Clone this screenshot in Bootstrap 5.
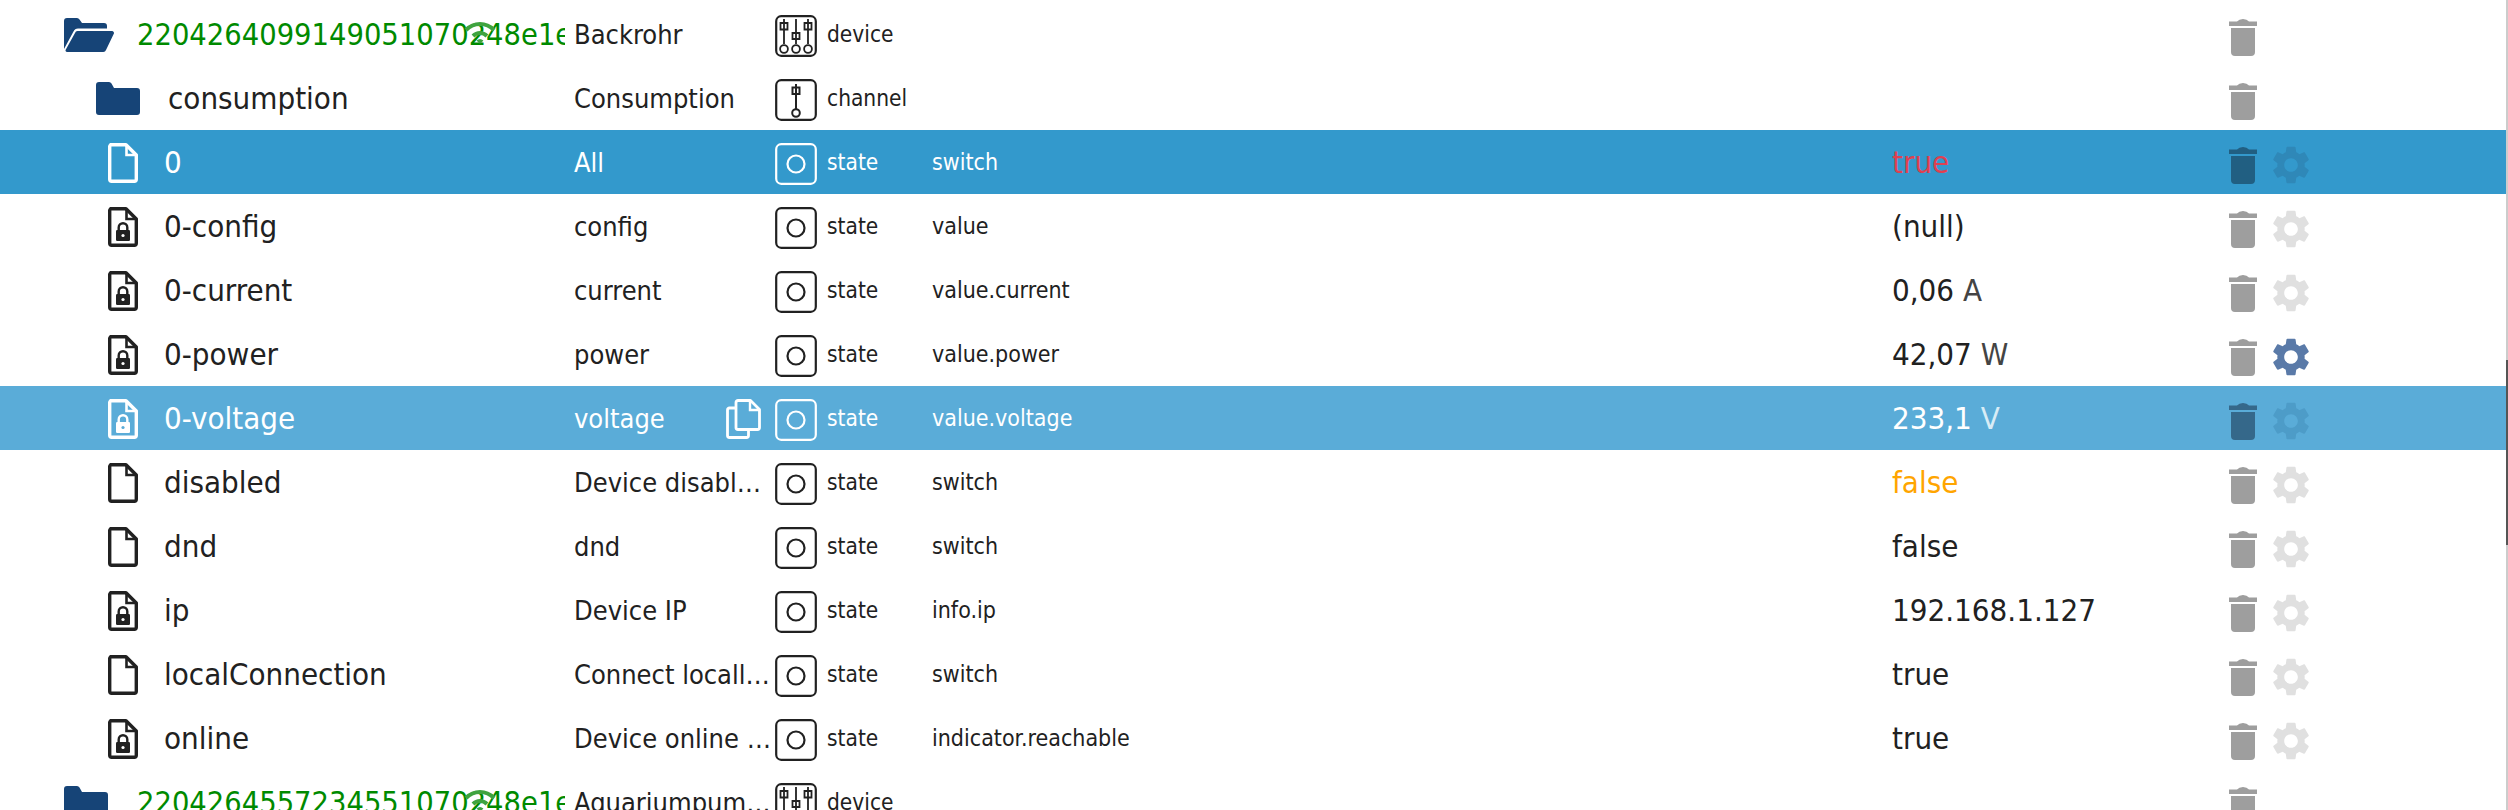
<!DOCTYPE html>
<html lang="en">
<head>
    <meta charset="UTF-8">
    <title>Objects</title>
    <link href="https://cdn.jsdelivr.net/npm/bootstrap@5.3.0/dist/css/bootstrap.min.css" rel="stylesheet">
    <style>
        html, body { height: 810px; overflow: hidden; }
        body {
            --lock-hole: #fff;
            background: #fff;
            color: #212121;
            font-family: "DejaVu Sans Condensed", "DejaVu Sans", sans-serif;
            font-stretch: condensed;
            padding-top: 2px;
            padding-right: 2px;
        }
        .scroll-track { position: fixed; top: 0; right: 0; bottom: 0; width: 2px; background: #ccc; }
        .scroll-thumb { position: absolute; top: 360px; left: 0; right: 0; height: 185px; background: #555; }
        .obj-row { height: 64px; padding-top: 1px; }
        .obj-row.is-selected { background: #3399cc; color: #fff; --lock-hole: #3399cc; }
        .obj-row.is-hover { background: #5aacd8; color: #fff; --lock-hole: #5aacd8; }
        .cell-tree { width: 565px; font-size: 31px; white-space: nowrap; overflow: hidden; }
        .cell-name { width: 210px; padding: 0 0 0 9px; font-size: 27px; line-height: 62px; height: 62px; white-space: nowrap; overflow: hidden; text-overflow: ellipsis; }
        .cell-type { width: 157px; font-size: 22.500px; }
        .cell-role { width: 960px; font-size: 23px; }
        .cell-value { width: 337px; font-size: 31px; }
        .cell-tree.level-0 { padding-left: 64px; }
        .cell-tree.level-1 { padding-left: 96px; }
        .cell-tree.level-2 { padding-left: 108px; }
        .tree-label { margin-left: 26px; }
        .level-1 .tree-label { margin-left: 28px; }
        .id-text { color: #008a00; font-size: 30.500px; margin-left: 23px; }
        .ico-folder-open { width: 50px; height: 34px; color: #164477; }
        .ico-folder { width: 44px; height: 33px; color: #164477; }
        .level-0 .ico-folder { margin-right: 6px; }
        .ico-file { width: 30px; height: 40px; }
        .ico-type { width: 42px; height: 42px; margin: 3px 10px 0 0; }
        .ico-copy { width: 35px; height: 40px; position: absolute; right: 14px; top: 11px; }
        .ico-wifi { width: 32px; height: 23px; color: #3fa33f; position: absolute; left: 464px; top: 9px; }
        .ico-trash { width: 28px; height: 37px; margin-top: 5px; color: #9e9e9e; }
        .ico-gear { width: 38px; height: 38px; margin: 5px 0 0 15px; color: #e0e0e0; }
        .is-selected .ico-trash { color: #215f82; }
        .is-selected .ico-gear { color: #2f88b8; }
        .is-hover .ico-trash { color: #35688a; }
        .is-hover .ico-gear { color: #4d9cc8; }
        .ico-gear.is-set { color: #5a7aa8; }
        .val-red { color: #e04050; }
        .val-orange { color: #ffa500; }
        .val-unit { color: #444; }
        .is-hover .val-unit { color: #d8ecf6; }
    </style>
</head>
<body>
    <!-- shared icons -->
    <svg width="0" height="0" class="position-absolute">
        <symbol id="folderOpen" viewBox="0 0 50 34">
            <path fill="currentColor" d="M0 3a3 3 0 0 1 3-3h10a3 3 0 0 1 2.500 1.500L18 5h22a3 3 0 0 1 3 3v2.500H14a5 5 0 0 0-4.500 3L0 31z"/>
            <path fill="currentColor" d="M13.500 13h34.500a2 2 0 0 1 1.800 2.800L42 32a3 3 0 0 1-2.700 2H3a1.500 1.500 0 0 1-1.300-2.200L11 15a3 3 0 0 1 2.500-2z"/>
        </symbol>
        <symbol id="folderClosed" viewBox="0 0 44 33">
            <path fill="currentColor" d="M0 3a3 3 0 0 1 3-3h10a3 3 0 0 1 2.500 1.500L18 6h23a3 3 0 0 1 3 3v21a3 3 0 0 1-3 3H3a3 3 0 0 1-3-3z"/>
        </symbol>
        <symbol id="fileIco" viewBox="0 0 30 40">
            <path fill="none" stroke="currentColor" stroke-width="3.400" stroke-linejoin="round" d="M3.500 1.700h14.500L28.300 12v24.300a2 2 0 0 1-2 2H3.700a2 2 0 0 1-2-2V3.500a2 2 0 0 1 2-2z"/>
            <path fill="none" stroke="currentColor" stroke-width="2.600" d="M18.500 2v10h10"/>
        </symbol>
        <symbol id="fileLock" viewBox="0 0 30 40">
            <use href="#fileIco"/>
            <rect x="8" y="23" width="14" height="11" rx="1.200" fill="currentColor"/>
            <path fill="none" stroke="currentColor" stroke-width="2.400" d="M10.700 24v-3.500a4.300 4.300 0 0 1 8.600 0V24"/>
            <circle cx="15" cy="28.500" r="1.600" fill="var(--lock-hole)"/>
        </symbol>
        <symbol id="typeState" viewBox="0 0 42 42">
            <rect x="1.200" y="1.200" width="39.600" height="39.600" rx="5" fill="none" stroke="currentColor" stroke-width="2.200"/>
            <circle cx="21" cy="21" r="8.500" fill="none" stroke="currentColor" stroke-width="2.200"/>
        </symbol>
        <symbol id="typeChannel" viewBox="0 0 42 42">
            <rect x="1.200" y="1.200" width="39.600" height="39.600" rx="5" fill="none" stroke="currentColor" stroke-width="2.200"/>
            <path fill="none" stroke="currentColor" stroke-width="2" d="M21 5v25M17.500 8.500h7v6.500h-7z"/>
            <circle cx="21" cy="34" r="3.800" fill="none" stroke="currentColor" stroke-width="2"/>
        </symbol>
        <symbol id="typeDevice" viewBox="0 0 42 42">
            <rect x="1.200" y="1.200" width="39.600" height="39.600" rx="5" fill="none" stroke="currentColor" stroke-width="2.200"/>
            <path fill="none" stroke="currentColor" stroke-width="1.800" d="M9 4v25M21 4v25M33 4v25M5.500 8h7v6.500h-7zM17.500 18h7v6h-7zM29.500 8h7v6.500h-7z"/>
            <g fill="none" stroke="currentColor" stroke-width="1.800"><circle cx="9" cy="34" r="3.900"/><circle cx="21" cy="34" r="3.900"/><circle cx="33" cy="34" r="3.900"/></g>
        </symbol>
        <symbol id="copyIco" viewBox="0 0 35 40">
            <path fill="none" stroke="currentColor" stroke-width="2.800" stroke-linejoin="round" d="M12 1.500h12.500l9 9v18a2 2 0 0 1-2 2H12a2 2 0 0 1-2-2v-25a2 2 0 0 1 2-2z"/>
            <path fill="none" stroke="currentColor" stroke-width="2.400" d="M24 2v9h9"/>
            <path fill="none" stroke="currentColor" stroke-width="2.800" stroke-linejoin="round" d="M9 9H3.500a2 2 0 0 0-2 2v25.500a2 2 0 0 0 2 2h17a2 2 0 0 0 2-2V31"/>
        </symbol>
        <symbol id="wifiIco" viewBox="0 0 32 23">
            <path fill="none" stroke="currentColor" stroke-width="4" d="M2 9c8-8 20-8 28 0M9 15c4-4 10-4 14 0M14 21c1.500-1.500 2.500-1.500 4 0"/>
        </symbol>
        <symbol id="trashIco" viewBox="0 0 28 37">
            <path fill="currentColor" d="M0 2.500h8Q10 0 14 0t6 2.500h8V7H0zM2 9h24v24a4 4 0 0 1-4 4H6a4 4 0 0 1-4-4z"/>
        </symbol>
        <symbol id="gearIco" viewBox="2.600 2 18.800 20">
            <path fill="currentColor" d="M19.140 12.940c.04-.3.06-.61.06-.94 0-.32-.02-.64-.07-.94l2.030-1.580c.18-.14.23-.41.12-.61l-1.920-3.320c-.12-.22-.37-.29-.59-.22l-2.390.96c-.5-.38-1.030-.7-1.620-.94l-.36-2.540c-.04-.24-.24-.41-.48-.41h-3.840c-.24 0-.43.17-.47.41l-.36 2.540c-.59.24-1.130.57-1.620.94l-2.390-.96c-.22-.08-.47 0-.59.22L2.740 8.870c-.12.21-.08.47.12.61l2.030 1.580c-.05.3-.09.63-.09.94s.02.64.07.94l-2.030 1.580c-.18.14-.23.41-.12.61l1.920 3.320c.12.22.37.29.59.22l2.390-.96c.5.38 1.030.7 1.620.94l.36 2.540c.05.24.24.41.48.41h3.840c.24 0 .44-.17.47-.41l.36-2.540c.59-.24 1.130-.56 1.620-.94l2.390.96c.22.08.47 0 .59-.22l1.920-3.320c.12-.22.07-.47-.12-.61l-2.010-1.580zM12 15.600c-1.980 0-3.600-1.620-3.600-3.600s1.620-3.600 3.600-3.600 3.600 1.620 3.600 3.600-1.620 3.600-3.600 3.600z"/>
        </symbol>
    </svg>

    <div class="obj-row d-flex align-items-center">
        <div class="cell-tree level-0 d-flex align-items-center position-relative">
            <svg class="ico-folder-open flex-shrink-0"><use href="#folderOpen"/></svg>
            <span class="id-text">2204264099149051070248e1e</span>
            <svg class="ico-wifi"><use href="#wifiIco"/></svg>
        </div>
        <div class="cell-name">Backrohr</div>
        <div class="cell-type d-flex align-items-center"><svg class="ico-type"><use href="#typeDevice"/></svg>device</div>
        <div class="cell-role"></div>
        <div class="cell-value"></div>
        <svg class="ico-trash"><use href="#trashIco"/></svg>
    </div>

    <div class="obj-row d-flex align-items-center">
        <div class="cell-tree level-1 d-flex align-items-center">
            <svg class="ico-folder flex-shrink-0"><use href="#folderClosed"/></svg>
            <span class="tree-label">consumption</span>
        </div>
        <div class="cell-name">Consumption</div>
        <div class="cell-type d-flex align-items-center"><svg class="ico-type"><use href="#typeChannel"/></svg>channel</div>
        <div class="cell-role"></div>
        <div class="cell-value"></div>
        <svg class="ico-trash"><use href="#trashIco"/></svg>
    </div>

    <div class="obj-row is-selected d-flex align-items-center">
        <div class="cell-tree level-2 d-flex align-items-center">
            <svg class="ico-file flex-shrink-0"><use href="#fileIco"/></svg>
            <span class="tree-label">0</span>
        </div>
        <div class="cell-name">All</div>
        <div class="cell-type d-flex align-items-center"><svg class="ico-type"><use href="#typeState"/></svg>state</div>
        <div class="cell-role">switch</div>
        <div class="cell-value val-red">true</div>
        <svg class="ico-trash"><use href="#trashIco"/></svg>
        <svg class="ico-gear"><use href="#gearIco"/></svg>
    </div>

    <div class="obj-row d-flex align-items-center">
        <div class="cell-tree level-2 d-flex align-items-center">
            <svg class="ico-file flex-shrink-0"><use href="#fileLock"/></svg>
            <span class="tree-label">0-config</span>
        </div>
        <div class="cell-name">config</div>
        <div class="cell-type d-flex align-items-center"><svg class="ico-type"><use href="#typeState"/></svg>state</div>
        <div class="cell-role">value</div>
        <div class="cell-value">(null)</div>
        <svg class="ico-trash"><use href="#trashIco"/></svg>
        <svg class="ico-gear"><use href="#gearIco"/></svg>
    </div>

    <div class="obj-row d-flex align-items-center">
        <div class="cell-tree level-2 d-flex align-items-center">
            <svg class="ico-file flex-shrink-0"><use href="#fileLock"/></svg>
            <span class="tree-label">0-current</span>
        </div>
        <div class="cell-name">current</div>
        <div class="cell-type d-flex align-items-center"><svg class="ico-type"><use href="#typeState"/></svg>state</div>
        <div class="cell-role">value.current</div>
        <div class="cell-value">0,06 <span class="val-unit">A</span></div>
        <svg class="ico-trash"><use href="#trashIco"/></svg>
        <svg class="ico-gear"><use href="#gearIco"/></svg>
    </div>

    <div class="obj-row d-flex align-items-center">
        <div class="cell-tree level-2 d-flex align-items-center">
            <svg class="ico-file flex-shrink-0"><use href="#fileLock"/></svg>
            <span class="tree-label">0-power</span>
        </div>
        <div class="cell-name">power</div>
        <div class="cell-type d-flex align-items-center"><svg class="ico-type"><use href="#typeState"/></svg>state</div>
        <div class="cell-role">value.power</div>
        <div class="cell-value">42,07 <span class="val-unit">W</span></div>
        <svg class="ico-trash"><use href="#trashIco"/></svg>
        <svg class="ico-gear is-set"><use href="#gearIco"/></svg>
    </div>

    <div class="obj-row is-hover d-flex align-items-center">
        <div class="cell-tree level-2 d-flex align-items-center">
            <svg class="ico-file flex-shrink-0"><use href="#fileLock"/></svg>
            <span class="tree-label">0-voltage</span>
        </div>
        <div class="cell-name position-relative">voltage<svg class="ico-copy"><use href="#copyIco"/></svg></div>
        <div class="cell-type d-flex align-items-center"><svg class="ico-type"><use href="#typeState"/></svg>state</div>
        <div class="cell-role">value.voltage</div>
        <div class="cell-value">233,1 <span class="val-unit">V</span></div>
        <svg class="ico-trash"><use href="#trashIco"/></svg>
        <svg class="ico-gear"><use href="#gearIco"/></svg>
    </div>

    <div class="obj-row d-flex align-items-center">
        <div class="cell-tree level-2 d-flex align-items-center">
            <svg class="ico-file flex-shrink-0"><use href="#fileIco"/></svg>
            <span class="tree-label">disabled</span>
        </div>
        <div class="cell-name">Device disabled flag</div>
        <div class="cell-type d-flex align-items-center"><svg class="ico-type"><use href="#typeState"/></svg>state</div>
        <div class="cell-role">switch</div>
        <div class="cell-value val-orange">false</div>
        <svg class="ico-trash"><use href="#trashIco"/></svg>
        <svg class="ico-gear"><use href="#gearIco"/></svg>
    </div>

    <div class="obj-row d-flex align-items-center">
        <div class="cell-tree level-2 d-flex align-items-center">
            <svg class="ico-file flex-shrink-0"><use href="#fileIco"/></svg>
            <span class="tree-label">dnd</span>
        </div>
        <div class="cell-name">dnd</div>
        <div class="cell-type d-flex align-items-center"><svg class="ico-type"><use href="#typeState"/></svg>state</div>
        <div class="cell-role">switch</div>
        <div class="cell-value">false</div>
        <svg class="ico-trash"><use href="#trashIco"/></svg>
        <svg class="ico-gear"><use href="#gearIco"/></svg>
    </div>

    <div class="obj-row d-flex align-items-center">
        <div class="cell-tree level-2 d-flex align-items-center">
            <svg class="ico-file flex-shrink-0"><use href="#fileLock"/></svg>
            <span class="tree-label">ip</span>
        </div>
        <div class="cell-name">Device IP</div>
        <div class="cell-type d-flex align-items-center"><svg class="ico-type"><use href="#typeState"/></svg>state</div>
        <div class="cell-role">info.ip</div>
        <div class="cell-value">192.168.1.127</div>
        <svg class="ico-trash"><use href="#trashIco"/></svg>
        <svg class="ico-gear"><use href="#gearIco"/></svg>
    </div>

    <div class="obj-row d-flex align-items-center">
        <div class="cell-tree level-2 d-flex align-items-center">
            <svg class="ico-file flex-shrink-0"><use href="#fileIco"/></svg>
            <span class="tree-label">localConnection</span>
        </div>
        <div class="cell-name">Connect locally to device</div>
        <div class="cell-type d-flex align-items-center"><svg class="ico-type"><use href="#typeState"/></svg>state</div>
        <div class="cell-role">switch</div>
        <div class="cell-value">true</div>
        <svg class="ico-trash"><use href="#trashIco"/></svg>
        <svg class="ico-gear"><use href="#gearIco"/></svg>
    </div>

    <div class="obj-row d-flex align-items-center">
        <div class="cell-tree level-2 d-flex align-items-center">
            <svg class="ico-file flex-shrink-0"><use href="#fileLock"/></svg>
            <span class="tree-label">online</span>
        </div>
        <div class="cell-name">Device online status</div>
        <div class="cell-type d-flex align-items-center"><svg class="ico-type"><use href="#typeState"/></svg>state</div>
        <div class="cell-role">indicator.reachable</div>
        <div class="cell-value">true</div>
        <svg class="ico-trash"><use href="#trashIco"/></svg>
        <svg class="ico-gear"><use href="#gearIco"/></svg>
    </div>

    <div class="obj-row d-flex align-items-center">
        <div class="cell-tree level-0 d-flex align-items-center position-relative">
            <svg class="ico-folder flex-shrink-0"><use href="#folderClosed"/></svg>
            <span class="id-text">2204264557234551070248e1e</span>
            <svg class="ico-wifi"><use href="#wifiIco"/></svg>
        </div>
        <div class="cell-name">Aquariumpumpe schalten</div>
        <div class="cell-type d-flex align-items-center"><svg class="ico-type"><use href="#typeDevice"/></svg>device</div>
        <div class="cell-role"></div>
        <div class="cell-value"></div>
        <svg class="ico-trash"><use href="#trashIco"/></svg>
    </div>

    <div class="scroll-track"><div class="scroll-thumb"></div></div>

    <script src="https://cdn.jsdelivr.net/npm/bootstrap@5.3.0/dist/js/bootstrap.bundle.min.js"></script>
</body>
</html>
